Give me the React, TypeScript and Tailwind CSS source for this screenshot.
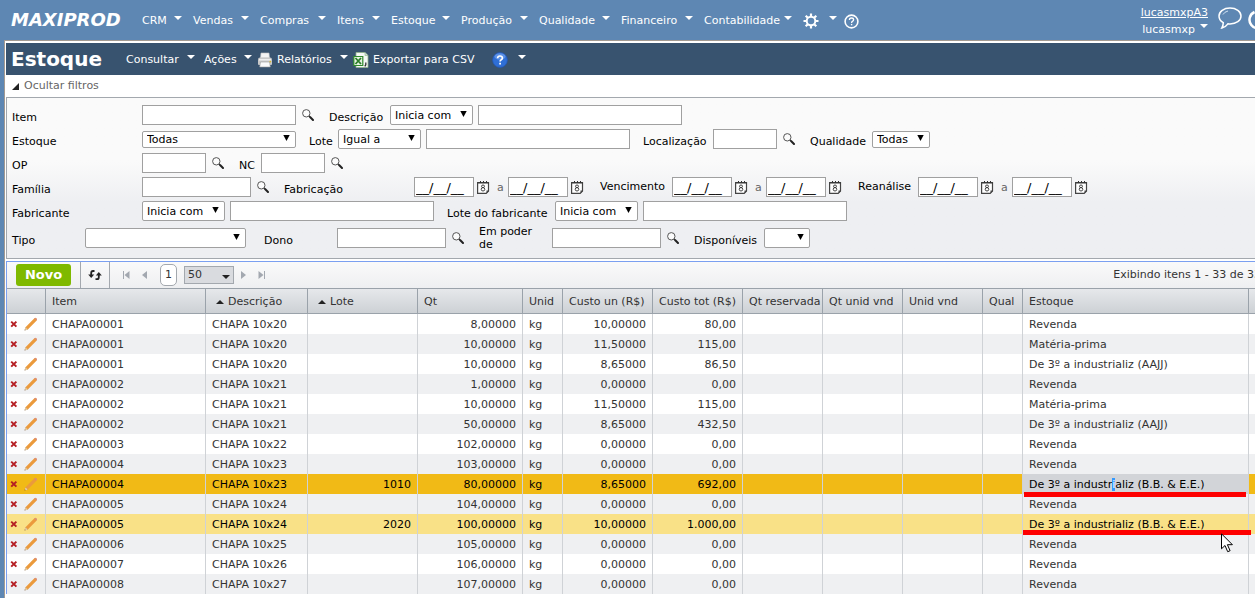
import React from "react";

const NAV = [
  { label: "CRM", width: "w-[51px]" },
  { label: "Vendas", width: "w-[67px]" },
  { label: "Compras", width: "w-[77px]" },
  { label: "Itens", width: "w-[54px]" },
  { label: "Estoque", width: "w-[70px]" },
  { label: "Produção", width: "w-[78px]" },
  { label: "Qualidade", width: "w-[82px]" },
  { label: "Financeiro", width: "w-[83px]" },
  { label: "Contabilidade", width: "w-[99px]" },
];

type Row = {
  item: string;
  desc: string;
  lote?: string;
  qt: string;
  un: string;
  tot: string;
  estoque: string;
};

const OWNED = "De 3º a industrializ (B.B. & E.E.)";

const ROWS: Row[] = [
  { item: "CHAPA00001", desc: "CHAPA 10x20", qt: "8,00000", un: "10,00000", tot: "80,00", estoque: "Revenda" },
  { item: "CHAPA00001", desc: "CHAPA 10x20", qt: "10,00000", un: "11,50000", tot: "115,00", estoque: "Matéria-prima" },
  { item: "CHAPA00001", desc: "CHAPA 10x20", qt: "10,00000", un: "8,65000", tot: "86,50", estoque: "De 3º a industrializ (AAJJ)" },
  { item: "CHAPA00002", desc: "CHAPA 10x21", qt: "1,00000", un: "0,00000", tot: "0,00", estoque: "Revenda" },
  { item: "CHAPA00002", desc: "CHAPA 10x21", qt: "10,00000", un: "11,50000", tot: "115,00", estoque: "Matéria-prima" },
  { item: "CHAPA00002", desc: "CHAPA 10x21", qt: "50,00000", un: "8,65000", tot: "432,50", estoque: "De 3º a industrializ (AAJJ)" },
  { item: "CHAPA00003", desc: "CHAPA 10x22", qt: "102,00000", un: "0,00000", tot: "0,00", estoque: "Revenda" },
  { item: "CHAPA00004", desc: "CHAPA 10x23", qt: "103,00000", un: "0,00000", tot: "0,00", estoque: "Revenda" },
  { item: "CHAPA00004", desc: "CHAPA 10x23", lote: "1010", qt: "80,00000", un: "8,65000", tot: "692,00", estoque: OWNED },
  { item: "CHAPA00005", desc: "CHAPA 10x24", qt: "104,00000", un: "0,00000", tot: "0,00", estoque: "Revenda" },
  { item: "CHAPA00005", desc: "CHAPA 10x24", lote: "2020", qt: "100,00000", un: "10,00000", tot: "1.000,00", estoque: OWNED },
  { item: "CHAPA00006", desc: "CHAPA 10x25", qt: "105,00000", un: "0,00000", tot: "0,00", estoque: "Revenda" },
  { item: "CHAPA00007", desc: "CHAPA 10x26", qt: "106,00000", un: "0,00000", tot: "0,00", estoque: "Revenda" },
  { item: "CHAPA00008", desc: "CHAPA 10x27", qt: "107,00000", un: "0,00000", tot: "0,00", estoque: "Revenda" },
];

const SELECTED = 8;
const HOVERED = 10;

function Caret() {
  return (
    <svg width="8" height="4" viewBox="0 0 8 4" className="mb-[6px] shrink-0" aria-hidden="true">
      <path d="M0 0h8L4 4z" fill="#fff" />
    </svg>
  );
}

function SearchButton({ label }: { label: string }) {
  return (
    <button type="button" aria-label={label} className="ml-[6px] h-3 w-3 shrink-0">
      <svg width="12" height="12" viewBox="0 0 12 12" aria-hidden="true">
        <circle cx="4.300" cy="4.300" r="3.700" fill="#fcfcfc" stroke="#555" strokeWidth="1" />
        <path d="M7 7l1.500 1.500" stroke="#333" strokeWidth="1.200" />
        <path d="M8.300 8.300L11 11" stroke="#222" strokeWidth="2" strokeLinecap="round" />
      </svg>
    </button>
  );
}

function CalendarButton({ label }: { label: string }) {
  return (
    <button type="button" aria-label={label} className="ml-[3px] h-[13px] w-[13px] shrink-0">
      <svg width="13" height="13" viewBox="0 0 13 13" aria-hidden="true">
        <path d="M.6 1.500h10.900v8.600l-2.300 2.300H.6z" fill="#fff" stroke="#444" strokeWidth="1.200" />
        <path d="M1 2h10.500" stroke="#333" strokeWidth="1" />
        <path d="M3.500 0v2M6.500 0v2M9.500 0v2" stroke="#333" strokeWidth="1" />
        <ellipse cx="6" cy="5.300" rx="1.500" ry="1.300" fill="none" stroke="#333" strokeWidth=".9" />
        <ellipse cx="6" cy="8.300" rx="1.800" ry="1.700" fill="none" stroke="#333" strokeWidth=".9" />
        <path d="M11.800 9.500v.8L9.500 12.600v-3z" fill="#444" />
      </svg>
    </button>
  );
}

function Label({ id, className, children }: { id: string; className: string; children: string }) {
  return (
    <label htmlFor={id} className={"shrink-0 pt-1 leading-[13px] " + className}>
      {children}
    </label>
  );
}

function Text({ id, className }: { id: string; className: string }) {
  return (
    <input
      id={id}
      type="text"
      aria-label={id}
      className={"h-5 shrink-0 border border-[#a0a0a0] bg-white px-1 outline-none " + className}
    />
  );
}

function Choice({ id, value, className }: { id: string; value: string; className: string }) {
  return (
    <span className={"relative shrink-0 " + className}>
      <select
        id={id}
        aria-label={id}
        className="block h-full w-full appearance-none rounded-[2px] border border-[#a0a0a0] bg-white pl-1 pt-px leading-[14px] outline-none"
      >
        <option>{value}</option>
      </select>
      <svg width="7" height="6" viewBox="0 0 7 6" className="pointer-events-none absolute right-[6px] top-1/2 -mt-1" aria-hidden="true">
        <path d="M.3 0h6.400L3.500 6z" fill="#000" />
      </svg>
    </span>
  );
}

function DateInput({ id }: { id: string }) {
  return (
    <>
      <input
        id={id}
        type="text"
        aria-label={id}
        defaultValue="__/__/__"
        className="h-5 w-[60px] shrink-0 border border-[#a0a0a0] bg-white px-px text-[13px] leading-[14px] outline-none"
      />
      <CalendarButton label={"Calendário " + id} />
    </>
  );
}

function DateRange({ id }: { id: string }) {
  return (
    <>
      <DateInput id={id} />
      <span className="w-[18px] shrink-0 pl-[7px] pt-[2px] text-[#666]">a</span>
      <DateInput id={id + "-ate"} />
    </>
  );
}

function PrinterIcon() {
  return (
    <svg width="16" height="16" viewBox="0 0 16 16" aria-hidden="true">
      <path d="M4 1h8l.500 5h-9z" fill="#f4f4f4" stroke="#c4c4c4" strokeWidth=".6" />
      <path d="M1 7.500Q1 5.500 3 5.500h10q2 0 2 2V12q0 1-1 1H2q-1 0-1-1z" fill="#c9c9c9" />
      <path d="M2 7h12v1.500H2z" fill="#eee" />
      <path d="M3.500 10h9l.8 5H2.700z" fill="#fafafa" stroke="#9b9b9b" strokeWidth=".6" />
      <circle cx="13.300" cy="9.600" r=".9" fill="#d8b92c" />
    </svg>
  );
}

function ExcelIcon() {
  return (
    <svg width="16" height="16" viewBox="0 0 16 16" aria-hidden="true">
      <path d="M3 .5h9l3 3v12H3z" fill="#f5f8f5" stroke="#8fb38c" strokeWidth=".8" />
      <path d="M12 .5v3h3" fill="#cfe0cd" stroke="#8fb38c" strokeWidth=".6" />
      <path d="M.8 4.500h9v9h-9z" fill="#e6f2e2" stroke="#2f8a2b" strokeWidth="1.200" />
      <path d="M2.500 6l5.500 6M8 6l-5.500 6" stroke="#2b7d28" strokeWidth="1.800" />
      <path d="M12.800 10.500v2.200l-1 1.600" stroke="#333" strokeWidth="1.300" fill="none" />
    </svg>
  );
}

function BlueHelpIcon() {
  return (
    <svg width="16" height="16" viewBox="0 0 16 16" aria-hidden="true">
      <circle cx="8" cy="8" r="7.400" fill="#2f6fd6" stroke="#2458b5" strokeWidth=".8" />
      <ellipse cx="8" cy="4.500" rx="5.500" ry="3.300" fill="#6fa0ec" opacity=".7" />
      <path d="M5.600 6.200Q5.700 4 8 4t2.400 2Q10.400 7.300 9 8q-.9.500-.9 1.500" fill="none" stroke="#fff" strokeWidth="1.700" />
      <path d="M7.200 10.700H9v1.700H7.200z" fill="#fff" />
    </svg>
  );
}

function GearIcon() {
  return (
    <svg width="16" height="16" viewBox="0 0 16 16" aria-hidden="true">
      <circle cx="8" cy="8" r="4.300" fill="none" stroke="#fff" strokeWidth="2" />
      <path
        d="M8 .5v3M8 12.500v3M.5 8h3M12.500 8h3M2.700 2.700l2.100 2.100M11.200 11.200l2.100 2.100M13.300 2.700l-2.100 2.100M4.800 11.200l-2.100 2.100"
        stroke="#fff"
        strokeWidth="2.200"
      />
    </svg>
  );
}

function HelpIcon() {
  return (
    <svg width="15" height="15" viewBox="0 0 15 15" aria-hidden="true">
      <circle cx="7.500" cy="7.500" r="6.400" fill="none" stroke="#fff" strokeWidth="1.600" />
      <path d="M5.400 6Q5.400 4 7.500 4t2.100 1.800Q9.600 6.900 8.400 7.400q-.8.400-.8 1.500" fill="none" stroke="#fff" strokeWidth="1.300" />
      <path d="M6.900 9.900h1.400v1.400H6.900z" fill="#fff" />
    </svg>
  );
}

function TopBar() {
  return (
    <header className="flex h-10 items-center text-white">
      <a href="#inicio" className="w-[142px] shrink-0 pl-[11px] text-[18px] font-bold italic leading-5">
        MAXIPROD
      </a>
      <nav className="flex shrink-0 items-center pt-[2px]">
        {NAV.map((n) => (
          <button key={n.label} type="button" className={"flex items-center justify-between pr-[11px] " + n.width}>
            {n.label}
            <Caret />
          </button>
        ))}
        <button type="button" aria-label="Configurações" className="flex items-center gap-[10px]">
          <GearIcon />
          <Caret />
        </button>
        <button type="button" aria-label="Ajuda" className="ml-[7px]">
          <HelpIcon />
        </button>
      </nav>
      <div className="ml-auto flex shrink-0 items-center gap-[10px] pr-[7px]">
        <div className="flex flex-col items-end gap-[2px] pt-px leading-[15px]">
          <a href="#conta" className="underline">
            lucasmxpA3
          </a>
          <button type="button" className="flex items-center gap-[5px]">
            lucasmxp
            <Caret />
          </button>
        </div>
        <button type="button" aria-label="Mensagens" className="-mt-1">
          <svg width="24" height="23" viewBox="0 0 24 23" aria-hidden="true">
            <path
              d="M12 1C5.800 1 1 4.400 1 9c0 2.900 1.600 5.200 4.300 6.600-.1 2.100-.5 3.700-1.400 5.300 2.600-.6 4.600-2 6-4.100.7.100 1.400.2 2.100.2 6.200 0 11-3.400 11-8S18.200 1 12 1z"
              fill="none"
              stroke="#fff"
              strokeWidth="1.500"
            />
            <path d="M5 7.500Q6.500 4.800 10 4" fill="none" stroke="#cfe0f2" strokeWidth="1" />
          </svg>
        </button>
        <button type="button" aria-label="Sair" className="-ml-1">
          <svg width="20" height="20" viewBox="0 0 20 20" aria-hidden="true">
            <path d="M6.500 2A8.500 8.500 0 1 0 13.500 2M10 0v8" fill="none" stroke="#fff" strokeWidth="2.500" />
          </svg>
        </button>
      </div>
    </header>
  );
}

function TitleBar() {
  return (
    <div className="flex h-8 items-center bg-[#38536f] text-white">
      <h1 className="w-[120px] shrink-0 pl-[5px] text-[20px] font-bold leading-6">Estoque</h1>
      <div className="flex items-center pt-[2px]">
        <button type="button" className="flex w-[78px] items-center justify-between pr-[9px]">
          Consultar
          <Caret />
        </button>
        <button type="button" className="flex w-[53px] items-center justify-between pr-[5px]">
          Ações
          <Caret />
        </button>
        <button type="button" className="flex w-[96px] items-center justify-between pr-[5px]">
          <span className="flex items-center gap-1">
            <PrinterIcon />
            Relatórios
          </span>
          <Caret />
        </button>
        <button type="button" className="flex w-[139px] items-center gap-1 whitespace-nowrap">
          <ExcelIcon />
          Exportar para CSV
        </button>
        <button type="button" aria-label="Ajuda da página" className="flex items-center gap-[10px]">
          <BlueHelpIcon />
          <Caret />
        </button>
      </div>
    </div>
  );
}

function Filters() {
  return (
    <form className="flex flex-col gap-1 border border-[#a3a8ae] bg-linear-to-b from-[#fafafa] from-40% to-[#eeeff2] to-65% pb-[10px] pl-[5px] pt-[7px] text-black">
      <div className="flex h-5 items-center">
        <Label id="item" className="w-[130px]">Item</Label>
        <Text id="item" className="w-[154px]" />
        <SearchButton label="Buscar item" />
        <Label id="descricao-op" className="ml-[15px] w-[61px]">Descrição</Label>
        <Choice id="descricao-op" value="Inicia com" className="h-5 w-[83px]" />
        <Text id="descricao" className="ml-[5px] w-[204px]" />
      </div>
      <div className="flex h-5 items-center">
        <Label id="estoque" className="w-[130px]">Estoque</Label>
        <Choice id="estoque" value="Todas" className="h-[17px] w-[154px]" />
        <Label id="lote-op" className="ml-[13px] w-[29px]">Lote</Label>
        <Choice id="lote-op" value="Igual a" className="h-5 w-[83px]" />
        <Text id="lote" className="ml-[5px] w-[204px]" />
        <Label id="localizacao" className="ml-[13px] w-[70px]">Localização</Label>
        <Text id="localizacao" className="w-[64px]" />
        <SearchButton label="Buscar localização" />
        <Label id="qualidade" className="ml-[15px] w-[62px]">Qualidade</Label>
        <Choice id="qualidade" value="Todas" className="h-[17px] w-[58px]" />
      </div>
      <div className="flex h-5 items-center">
        <Label id="op" className="w-[130px]">OP</Label>
        <Text id="op" className="w-[64px]" />
        <SearchButton label="Buscar OP" />
        <Label id="nc" className="ml-[15px] w-[22px]">NC</Label>
        <Text id="nc" className="w-[64px]" />
        <SearchButton label="Buscar NC" />
      </div>
      <div className="flex h-5 items-center">
        <Label id="familia" className="w-[130px]">Família</Label>
        <Text id="familia" className="w-[109px]" />
        <SearchButton label="Buscar família" />
        <Label id="fabricacao" className="ml-[15px] w-[130px]">Fabricação</Label>
        <DateRange id="fabricacao" />
        <label htmlFor="vencimento" className="ml-4 w-[72px] shrink-0">Vencimento</label>
        <DateRange id="vencimento" />
        <label htmlFor="reanalise" className="ml-4 w-[60px] shrink-0">Reanálise</label>
        <DateRange id="reanalise" />
      </div>
      <div className="flex h-5 items-center">
        <Label id="fabricante-op" className="w-[130px]">Fabricante</Label>
        <Choice id="fabricante-op" value="Inicia com" className="h-5 w-[83px]" />
        <Text id="fabricante" className="ml-[5px] w-[204px]" />
        <Label id="lote-fab-op" className="ml-[13px] w-[108px]">Lote do fabricante</Label>
        <Choice id="lote-fab-op" value="Inicia com" className="h-5 w-[83px]" />
        <Text id="lote-fab" className="ml-[5px] w-[204px]" />
      </div>
      <div className="mt-[3px] flex h-5 items-center">
        <Label id="tipo" className="w-[73px]">Tipo</Label>
        <Choice id="tipo" value="" className="h-5 w-[161px]" />
        <Label id="dono" className="ml-[18px] w-[73px]">Dono</Label>
        <Text id="dono" className="w-[109px]" />
        <SearchButton label="Buscar dono" />
        <label htmlFor="em-poder" className="ml-[15px] w-[73px] shrink-0 pr-2 leading-[13px]">Em poder de</label>
        <Text id="em-poder" className="w-[109px]" />
        <SearchButton label="Buscar em poder de" />
        <Label id="disponiveis" className="ml-[15px] w-[70px]">Disponíveis</Label>
        <Choice id="disponiveis" value="" className="h-5 w-[46px]" />
      </div>
    </form>
  );
}

function Toolbar() {
  return (
    <div className="flex h-[26px] items-center bg-linear-to-b from-[#fafafa] to-[#eeeff1] pl-[9px] text-[#333]">
      <button type="button" className="h-[22px] w-[55px] rounded-[3px] bg-[#7fb900] text-[13px] font-bold leading-[22px] text-white">
        Novo
      </button>
      <button type="button" aria-label="Atualizar" className="ml-[9px] flex h-full w-[30px] items-center justify-center border-x border-[#a3a8ae]">
        <svg width="14" height="12" viewBox="0 0 14 12" aria-hidden="true">
          <path d="M6.500 2H5Q3.200 2 3.200 4V6" fill="none" stroke="#222" strokeWidth="1.800" />
          <path d="M.2 5.500h6L3.200 9z" fill="#222" />
          <path d="M7.500 10.200H9q1.800 0 1.800-2V6" fill="none" stroke="#222" strokeWidth="1.800" />
          <path d="M7.800 6.500h6L10.800 3z" fill="#222" />
        </svg>
      </button>
      <button type="button" aria-label="Primeira página" className="ml-3">
        <svg width="8" height="8" viewBox="0 0 8 8" className="block" aria-hidden="true">
          <path d="M1.500 0v8" stroke="#a3a8b0" strokeWidth="1" />
          <path d="M7.500 0v8L2.500 4z" fill="#a3a8b0" />
        </svg>
      </button>
      <button type="button" aria-label="Página anterior" className="ml-3">
        <svg width="5" height="8" viewBox="0 0 5 8" className="block" aria-hidden="true">
          <path d="M5 0v8L0 4z" fill="#a3a8b0" />
        </svg>
      </button>
      <button type="button" className="ml-[13px] h-[22px] w-[17px] rounded-[5px] border border-[#a3a8ae] bg-white leading-5">
        1
      </button>
      <span className="relative ml-[7px] h-[18px] w-[50px]">
        <select aria-label="Itens por página" className="block h-full w-full appearance-none border border-[#a3a8ae] bg-[#d9dbdf] pl-[3px] leading-4 outline-none">
          <option>50</option>
        </select>
        <svg width="8" height="4" viewBox="0 0 8 4" className="pointer-events-none absolute right-1 top-[9px]" aria-hidden="true">
          <path d="M0 0h8L4 4z" fill="#222" />
        </svg>
      </span>
      <button type="button" aria-label="Próxima página" className="ml-[7px]">
        <svg width="5" height="8" viewBox="0 0 5 8" className="block" aria-hidden="true">
          <path d="M0 0v8l5-4z" fill="#a3a8b0" />
        </svg>
      </button>
      <button type="button" aria-label="Última página" className="ml-3">
        <svg width="8" height="8" viewBox="0 0 8 8" className="block" aria-hidden="true">
          <path d="M6.500 0v8" stroke="#a3a8b0" strokeWidth="1" />
          <path d="M.5 0v8l5-4z" fill="#a3a8b0" />
        </svg>
      </button>
      <span className="ml-auto pr-[14px]">Exibindo itens 1 - 33 de 33</span>
    </div>
  );
}

function Th({ children, sorted }: { children?: string; sorted?: boolean }) {
  return (
    <th className="h-[26px] overflow-hidden whitespace-nowrap border-y border-r border-[#9aa2aa] bg-linear-to-b from-[#e6e8eb] to-[#cdd1d5] pb-0 pl-[6px] pr-0 pt-[2px] text-left align-middle font-normal">
      {sorted && (
        <svg width="8" height="4" viewBox="0 0 8 4" className="ml-1 mr-1 inline-block align-middle" aria-hidden="true">
          <path d="M0 4h8L4 0z" fill="#222" />
        </svg>
      )}
      {children}
    </th>
  );
}

function RowActions() {
  return (
    <div className="flex items-center gap-[6px] pl-[3px]">
      <button type="button" aria-label="Excluir">
        <svg width="8" height="8" viewBox="0 0 8 8" className="block" aria-hidden="true">
          <path d="M1.200 1.600l5.200 5M6.400 1.600L1.200 6.600" stroke="#b51f24" strokeWidth="2" />
        </svg>
      </button>
      <button type="button" aria-label="Editar">
        <svg width="14" height="14" viewBox="0 0 14 14" className="block" aria-hidden="true">
          <path d="M.5 13.500l1-3.300 2.300 2.200z" fill="#6b4a2a" />
          <path d="M1.500 10.200L10.400 1.200q.9-.8 2 .1t.3 2.200L3.800 12.400z" fill="#eb9a3c" />
          <path d="M1.500 10.200l2.300 2.200-1.900.8-1-.9z" fill="#f3d3a4" />
          <path d="M10.200 1.400q1-1 2.100 0t.4 2z" fill="#d98a86" />
        </svg>
      </button>
    </div>
  );
}

function StockTable() {
  const base = "h-5 whitespace-nowrap border-r border-[#cfd2d6] px-[6px] pb-0 pt-[2px] leading-[18px]";
  const cell = base + " overflow-hidden";
  const num = cell + " text-right";
  return (
    <table className="w-full table-fixed border-separate border-spacing-0 text-[#333]">
      <colgroup>
        <col className="w-[39px]" />
        <col className="w-[160px]" />
        <col className="w-[102px]" />
        <col className="w-[110px]" />
        <col className="w-[105px]" />
        <col className="w-[40px]" />
        <col className="w-[90px]" />
        <col className="w-[90px]" />
        <col className="w-[80px]" />
        <col className="w-[80px]" />
        <col className="w-[80px]" />
        <col className="w-[40px]" />
        <col className="w-[226px]" />
        <col />
      </colgroup>
      <thead>
        <tr>
          <Th />
          <Th>Item</Th>
          <Th sorted>Descrição</Th>
          <Th sorted>Lote</Th>
          <Th>Qt</Th>
          <Th>Unid</Th>
          <Th>Custo un (R$)</Th>
          <Th>Custo tot (R$)</Th>
          <Th>Qt reservada</Th>
          <Th>Qt unid vnd</Th>
          <Th>Unid vnd</Th>
          <Th>Qual</Th>
          <Th>Estoque</Th>
          <Th />
        </tr>
      </thead>
      <tbody>
        {ROWS.map((r, i) => {
          const tone =
            i === SELECTED
              ? "bg-[#f1ba16] text-black"
              : i === HOVERED
                ? "bg-[#f9e187] text-black"
                : i % 2
                  ? "bg-[#eff0f2]"
                  : "bg-white";
          return (
            <tr key={i} className={tone}>
              <td className="h-5 border-r border-[#cfd2d6] p-0">
                <RowActions />
              </td>
              <td className={cell}>{r.item}</td>
              <td className={cell}>{r.desc}</td>
              <td className={num}>{r.lote}</td>
              <td className={num}>{r.qt}</td>
              <td className={cell}>kg</td>
              <td className={num}>{r.un}</td>
              <td className={num}>{r.tot}</td>
              <td className={cell} />
              <td className={cell} />
              <td className={cell} />
              <td className={cell} />
              <td className={"relative " + base + (i === SELECTED ? " bg-[#d2d4d8]" : "")}>
                {i === SELECTED ? (
                  <>
                    De 3º a industr<mark className="bg-[#3399ff] text-white">i</mark>aliz (B.B. &amp; E.E.)
                    <span className="absolute left-px right-[2px] top-[18px] z-10 h-[5px] bg-[#fe0000]" />
                  </>
                ) : (
                  r.estoque
                )}
                {i === HOVERED && (
                  <>
                    <span className="absolute -right-[3px] left-0 top-4 z-10 h-[5px] bg-[#fe0000]" />
                    <svg width="13" height="20" viewBox="0 0 13 20" className="absolute right-[14px] top-[19px] z-20" aria-hidden="true">
                      <path d="M.5.8v15l3.500-3.300 2.700 6.200 2.400-1-2.700-6h5z" fill="#fff" stroke="#000" strokeWidth="1" />
                    </svg>
                  </>
                )}
              </td>
              <td className={cell} />
            </tr>
          );
        })}
      </tbody>
    </table>
  );
}

export default function App() {
  return (
    <div className="h-screen overflow-hidden bg-[#5e87b3] font-['DejaVu_Sans',Verdana,sans-serif] text-[11px] leading-[14px]">
      <div className="flex h-full min-w-[1275px] flex-col">
        <TopBar />
        <main className="ml-1 grow border-l border-t border-[#a39a92] bg-white pl-px pt-[2px]">
          <TitleBar />
          <button type="button" className="flex h-[22px] items-center gap-[5px] pl-[6px] text-[#666]">
            <svg width="7" height="7" viewBox="0 0 7 7" aria-hidden="true">
              <path d="M0 7h7V0z" fill="#222" />
            </svg>
            Ocultar filtros
          </button>
          <Filters />
          <section className="mt-[2px] border-l border-t border-[#7ba0f0]">
            <Toolbar />
            <StockTable />
          </section>
        </main>
      </div>
    </div>
  );
}
